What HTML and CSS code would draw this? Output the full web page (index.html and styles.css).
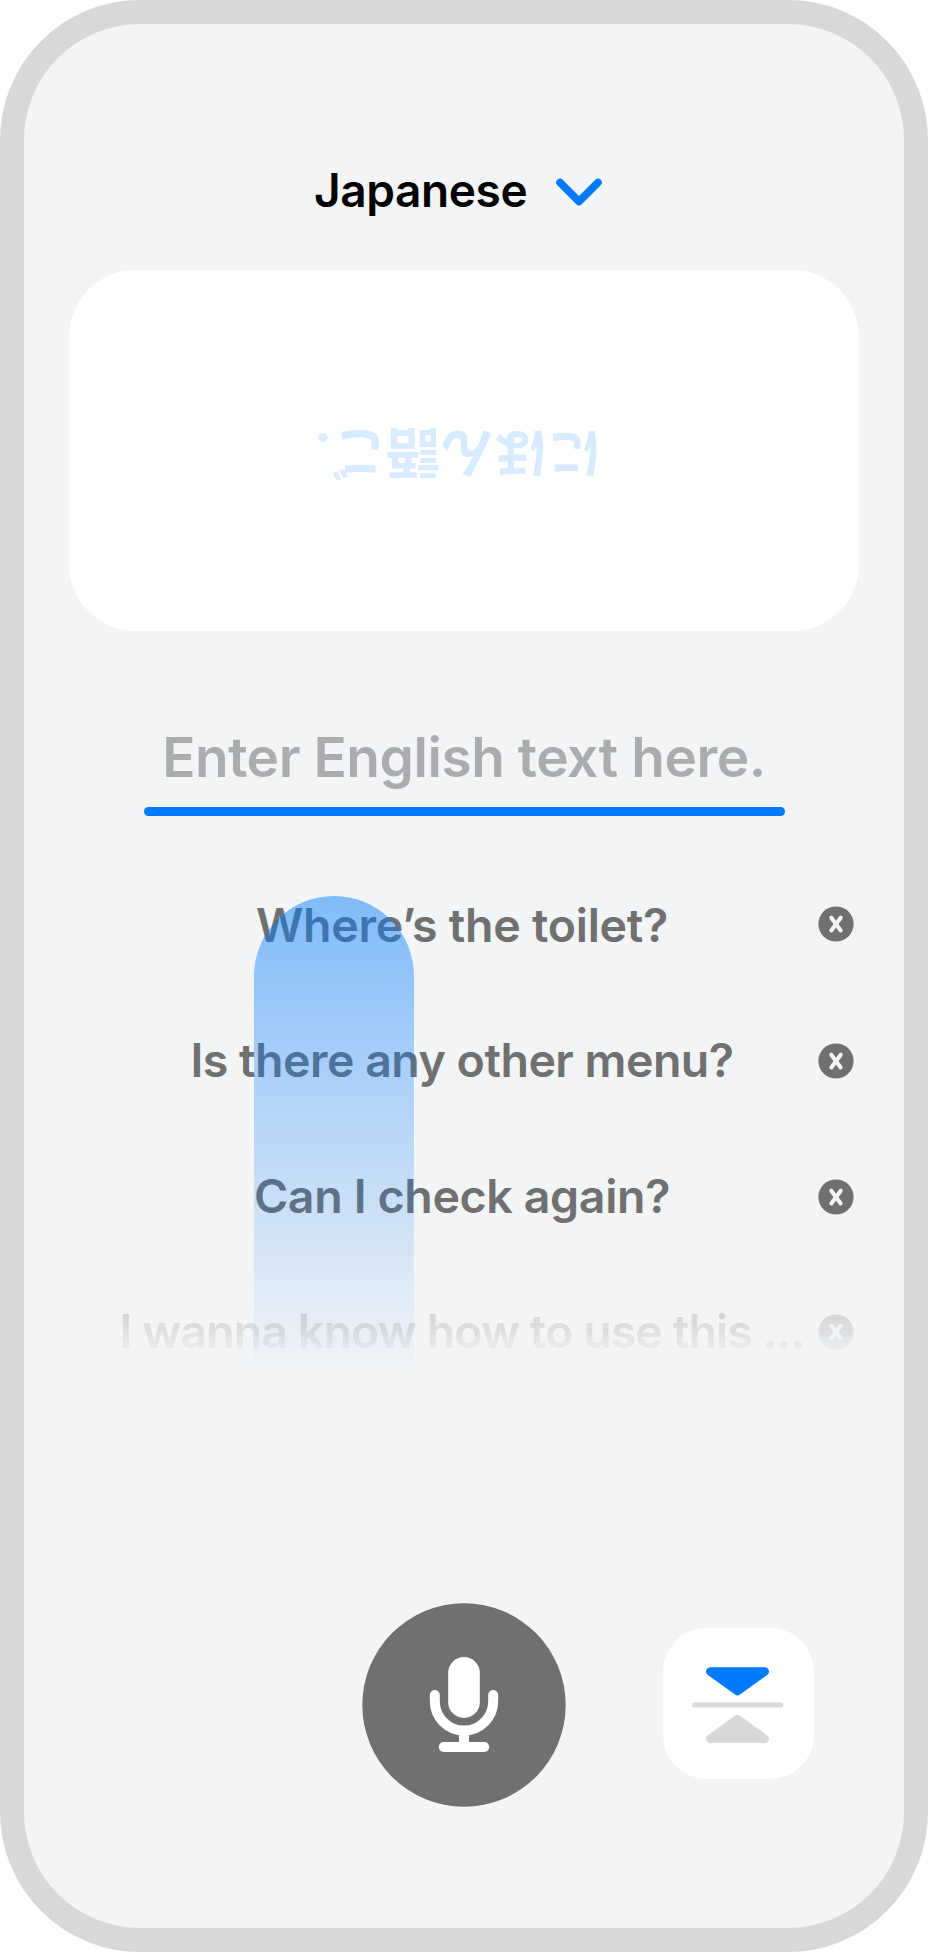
FILE: index.html
```html
<!DOCTYPE html>
<html lang="en">
<head>
<meta charset="utf-8">
<title>Translator</title>
<link rel="stylesheet" href="styles.css">
</head>
<body>
<main class="phone">
  <header class="language">
    <span class="language-name">Japanese</span>
    <svg class="chevron" width="48" height="30" viewBox="0 0 48 30"><path d="M5 5.500L24 24.500L43 5.500" fill="none" stroke="#007aff" stroke-width="7.600" stroke-linecap="round" stroke-linejoin="round"/></svg>
  </header>
  <section class="card"><p class="translation" lang="ja">にほん語ご<span class="stop">.</span></p></section>
  <section class="entry"><span class="placeholder">Enter English text here.</span></section>
  <section class="history">
    <div class="row"><span class="phrase p1">Where’s the toilet?</span><svg class="close first" viewBox="0 0 36 36"><circle cx="18" cy="18" r="17.600"/><path d="M13.300 11.700L22.700 24.500M22.700 11.700L13.300 24.500"/></svg></div>
    <div class="row"><span class="phrase p2">Is there any other menu?</span><svg class="close" viewBox="0 0 36 36"><circle cx="18" cy="18" r="17.600"/><path d="M13.300 11.700L22.700 24.500M22.700 11.700L13.300 24.500"/></svg></div>
    <div class="row"><span class="phrase p3">Can I check again?</span><svg class="close" viewBox="0 0 36 36"><circle cx="18" cy="18" r="17.600"/><path d="M13.300 11.700L22.700 24.500M22.700 11.700L13.300 24.500"/></svg></div>
    <div class="row faded"><span class="phrase p4">I wanna know how to use this ...</span><svg class="close" viewBox="0 0 36 36"><circle cx="18" cy="18" r="17.600"/><path d="M13.300 11.700L22.700 24.500M22.700 11.700L13.300 24.500"/></svg></div>
    <div class="swipe"></div>
  </section>
  <footer class="controls">
    <svg class="mic" width="204" height="204" viewBox="0 0 204 204">
      <circle cx="102" cy="102" r="101.700" fill="#707070"/>
      <rect x="86.200" y="54" width="31.600" height="61" rx="15.800" fill="#fff"/>
      <path d="M72.800 92v6.300a29.200 29.200 0 0 0 58.400 0V92M102 127.500V144M81.800 144h40.400" fill="none" stroke="#fff" stroke-width="10" stroke-linecap="round"/>
    </svg>
    <svg class="flip" width="151" height="151" viewBox="0 0 151 151">
      <rect width="151" height="151" rx="44" fill="#fff"/>
      <path d="M47.300 43.500h54.400L74.500 63Z" fill="#007aff" stroke="#007aff" stroke-width="8.600" stroke-linejoin="round"/>
      <path d="M31.500 77h86.300" stroke="#d8d8d8" stroke-width="5" stroke-linecap="round"/>
      <path d="M47.300 110.700h54.400L74.500 91.200Z" fill="#d8d8d8" stroke="#d8d8d8" stroke-width="8.600" stroke-linejoin="round"/>
    </svg>
  </footer>
</main>
</body>
</html>
```
FILE: styles.css
```css
* { box-sizing: border-box; }
body { margin: 0; background: #fff; font-family: Inter, "Noto Sans CJK JP", sans-serif; font-weight: 600; }
.phone { width: 928px; height: 1952px; border: 24px solid #d8d8d8; border-radius: 140px; background: #f2f4f6; display: flex; flex-direction: column; align-items: center; padding-top: 137px; }
.language { height: 60px; width: 100%; display: flex; align-items: center; padding-left: 290px; gap: 29px; }
.language-name { width: 212px; font-size: 46px; line-height: 60px; color: #000; white-space: nowrap; letter-spacing: -0.400px; padding-bottom: 2px; }
.chevron { flex: none; margin-top: 2px; }
.card { width: 790px; height: 361.500px; margin-top: 48.500px; border-radius: 67px; background: #fff; display: flex; align-items: center; justify-content: center; padding: 3px 11px 0 0; }
.translation { margin: 0; transform: rotate(180deg); color: #d8eaff; font-size: 54px; line-height: 72px; font-weight: 700; white-space: nowrap; }
.stop { font-family: Inter, sans-serif; }
.entry { width: 641px; height: 98px; margin-top: 87px; display: flex; flex-direction: column; align-items: center; justify-content: space-between; }
.entry::after { content: ""; width: 100%; height: 9px; border-radius: 5px; background: #007aff; }
.placeholder { font-size: 55px; line-height: 78px; color: #aaacae; white-space: nowrap; letter-spacing: -0.450px; }
.history { position: relative; width: 100%; margin-top: 43px; display: grid; grid-template-rows: repeat(4, 135.300px); }
.row { display: grid; grid-template-columns: 794px 36px; align-items: center; }
.phrase { font-size: 46.500px; line-height: 64px; color: #707070; text-align: center; white-space: nowrap; padding: 0 0 3px 82px; }
.p1 { letter-spacing: -0.250px; }
.p2 { letter-spacing: -0.500px; }
.p3 { letter-spacing: -0.350px; }
.p4 { letter-spacing: -0.900px; }
.close { width: 36px; height: 36px; margin-bottom: 1px; }
.close.first { margin-bottom: 6px; }
.close circle { fill: #707070; }
.close path { fill: none; stroke: #f2f4f6; stroke-width: 4; stroke-linecap: round; }
.faded { mask-image: linear-gradient(rgba(0,0,0,.25) 33%, rgba(0,0,0,.07) 62%, transparent 76%); }
.swipe { position: absolute; left: 230px; top: 36.500px; width: 160px; height: 466px; border-radius: 80px 80px 0 0; background: linear-gradient(rgba(0,122,255,.47), rgba(0,122,255,.01)); }
.controls { width: 100%; margin-top: 202.800px; display: flex; align-items: center; gap: 97px; padding-left: 338px; }
.flip { margin-bottom: 3px; }
```
